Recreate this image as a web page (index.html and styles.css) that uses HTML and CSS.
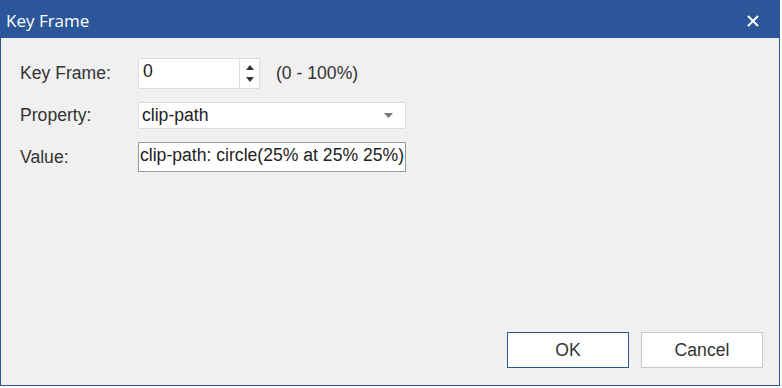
FILE: index.html
```html
<!DOCTYPE html>
<html lang="en">
<head>
    <meta charset="UTF-8">
    <title>Key Frame</title>
    <link rel="stylesheet" href="styles.css">
</head>
<body>
    <div class="dialog">
        <div class="titlebar">
            <span class="title">Key Frame</span>
            <span class="close">
                <svg width="14" height="14" viewBox="0 0 14 14"><path d="M2 2L12 12M12 2L2 12" stroke="#fff" stroke-width="2"/></svg>
            </span>
        </div>
        <div class="content">
            <div class="form">
                <div class="row">
                    <label class="label">Key Frame:</label>
                    <div class="spin">
                        <input class="spin-input" type="text" value="0">
                        <div class="spin-btns">
                            <svg width="8" height="5" viewBox="0 0 8 5"><path d="M0 5L4 0L8 5Z" fill="#333"/></svg>
                            <svg width="8" height="5" viewBox="0 0 8 5"><path d="M0 0L8 0L4 5Z" fill="#333"/></svg>
                        </div>
                    </div>
                    <span class="hint">(0 - 100%)</span>
                </div>
                <div class="row">
                    <label class="label">Property:</label>
                    <div class="select">
                        <span>clip-path</span>
                        <svg width="9" height="5" viewBox="0 0 9 5"><path d="M0 0L9 0L4.5 5Z" fill="#777"/></svg>
                    </div>
                </div>
                <div class="row">
                    <label class="label">Value:</label>
                    <input class="value-input" type="text" value="clip-path: circle(25% at 25% 25%)">
                </div>
            </div>
            <div class="buttons">
                <button class="btn btn-default">OK</button>
                <button class="btn">Cancel</button>
            </div>
        </div>
    </div>
</body>
</html>
```

FILE: styles.css
```css
body { margin: 0; font-family: "Liberation Sans", Arial, sans-serif; font-size: 17.6px; color: #222; background: #fff; }
.dialog { width: 780px; height: 386px; border: 1px solid #2b579a; border-top: none; background: #f0f0f0; display: flex; flex-direction: column; box-sizing: border-box; }
.titlebar { height: 38px; background: #2b579a; display: flex; align-items: center; justify-content: space-between; padding: 3px 20px 0 6px; margin: 0 -1px; box-sizing: border-box; }
.title { color: #fff; font-family: "Open Sans", "Noto Sans", sans-serif; font-size: 17px; }
.close { display: flex; align-items: center; }
.content { flex: 1; display: flex; flex-direction: column; justify-content: space-between; padding: 20px 16px 17px 19px; }
.form { display: flex; flex-direction: column; gap: 13px; }
.row { display: flex; align-items: center; }
.label { width: 118px; color: #333; }
.spin { display: flex; height: 31px; border: 1px solid #dcdcdc; background: #fff; box-sizing: border-box; width: 122px; }
.spin-input { width: 92px; border: none; border-right: 1px solid #dcdcdc; font: inherit; color: #222; padding: 0 4px 4px; outline: none; }
.spin-btns { flex: 1; display: flex; flex-direction: column; align-items: center; justify-content: center; gap: 7px; }
.hint { margin-left: 16px; color: #333; }
.select { width: 268px; height: 27px; box-sizing: border-box; border: 1px solid #dcdcdc; background: #fff; display: flex; align-items: center; justify-content: space-between; padding: 0 12px 0 3px; }
.value-input { width: 268px; height: 30px; box-sizing: border-box; border: 1px solid #999; background: #fff; font: inherit; color: #222; padding: 0 1px 3px; outline: none; }
.buttons { display: flex; justify-content: flex-end; gap: 12px; }
.btn { width: 122px; height: 36px; background: #fff; border: 1px solid #c8c8c8; font: inherit; color: #333; }
.btn-default { border-color: #2b579a; }
```
